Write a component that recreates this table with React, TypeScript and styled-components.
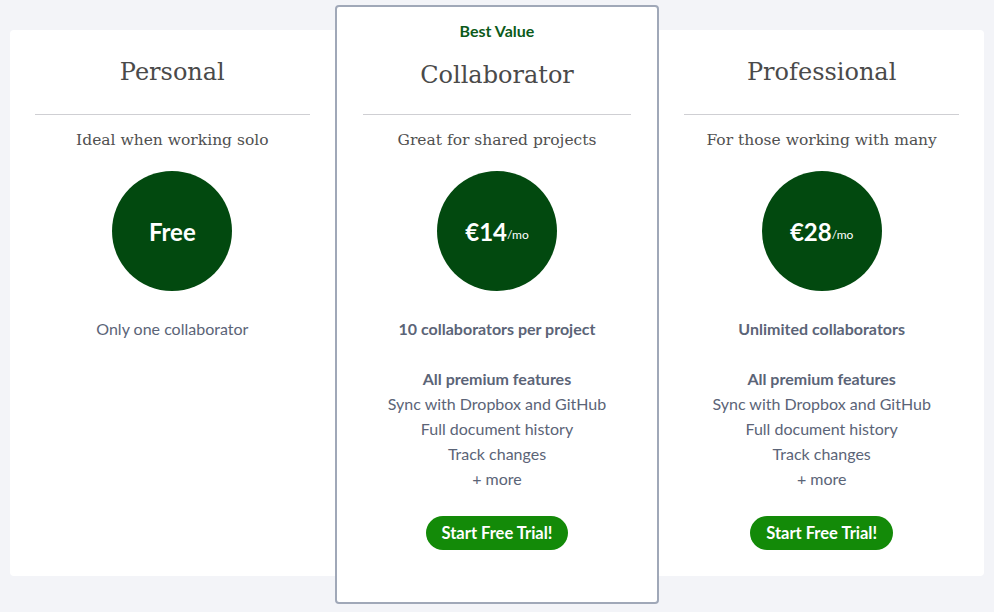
import React from 'react'
import styled, { createGlobalStyle } from 'styled-components'

const GlobalStyle = createGlobalStyle`
  body {
    margin: 0;
    background: #f3f4f8;
    font-family: Lato, "Liberation Sans", sans-serif;
  }
`

const Page = styled.div`
  padding: 5px 10px 0;
`

const Panel = styled.div`
  display: grid;
  grid-template-columns: repeat(3, 1fr);
  align-items: stretch;
`

const Card = styled.div<{ $featured?: boolean; $side?: 'left' | 'right' }>`
  display: flex;
  flex-direction: column;
  align-items: center;
  text-align: center;
  background: #ffffff;
  padding: 0 25px;
  margin: 25px 0 28px;
  border-radius: ${(p) => (p.$side === 'left' ? '4px 0 0 4px' : '0 4px 4px 0')};
  ${(p) =>
    p.$featured &&
    `
    margin: 0;
    padding: 0 26px 52px;
    border: 2px solid #a0a8b8;
    border-radius: 4px;
  `}
`

const Badge = styled.div`
  margin-top: 13px;
  line-height: 22px;
  font-size: 16px;
  font-weight: 700;
  color: #0b5a1a;
`

const Title = styled.h2<{ $featured?: boolean }>`
  margin: ${(p) => (p.$featured ? '17px 0 23px' : '26px 0 26px')};
  line-height: 32px;
  font-family: "DejaVu Serif", "Liberation Serif", serif;
  font-weight: 400;
  font-size: 24px;
  color: #4a4a4a;
`

const Rule = styled.hr`
  align-self: stretch;
  margin: 0;
  border: none;
  border-top: 1px solid #cfcfd3;
`

const Tagline = styled.p`
  margin: 13px 0 0;
  line-height: 24px;
  font-family: "DejaVu Serif", "Liberation Serif", serif;
  font-size: 15.5px;
  color: #505050;
`

const Price = styled.div`
  margin-top: 19px;
  width: 120px;
  height: 120px;
  border-radius: 50%;
  background: #02490f;
  color: #ffffff;
  display: flex;
  align-items: center;
  justify-content: center;
  font-size: 24px;
  font-weight: 700;
`

const Per = styled.span`
  font-size: 12px;
  font-weight: 400;
  margin-top: 6px;
`

const Seats = styled.p<{ $bold?: boolean }>`
  margin: 28px 0 0;
  line-height: 20px;
  font-size: 16px;
  font-weight: ${(p) => (p.$bold ? 700 : 400)};
  color: #5b6477;
`

const Features = styled.ul`
  list-style: none;
  margin: 27px 0 0;
  padding: 0;
  line-height: 25px;
  font-size: 16px;
  color: #5b6477;
`

const Feature = styled.li<{ $bold?: boolean }>`
  font-weight: ${(p) => (p.$bold ? 700 : 400)};
`

const TrialButton = styled.button`
  margin-top: 25px;
  height: 34px;
  padding: 0 16px;
  border: none;
  border-radius: 17px;
  background: #138a08;
  color: #ffffff;
  font-family: Lato, "Liberation Sans", sans-serif;
  font-size: 16.5px;
  font-weight: 700;
  cursor: pointer;
`

const premium = [
  'Sync with Dropbox and GitHub',
  'Full document history',
  'Track changes',
  '+ more',
]

type Plan = {
  name: string
  tagline: string
  price: string
  per?: boolean
  seats: string
  paid?: boolean
  featured?: boolean
  side?: 'left' | 'right'
}

const plans: Plan[] = [
  {
    name: 'Personal',
    tagline: 'Ideal when working solo',
    price: 'Free',
    seats: 'Only one collaborator',
    side: 'left',
  },
  {
    name: 'Collaborator',
    tagline: 'Great for shared projects',
    price: '€14',
    per: true,
    seats: '10 collaborators per project',
    paid: true,
    featured: true,
  },
  {
    name: 'Professional',
    tagline: 'For those working with many',
    price: '€28',
    per: true,
    seats: 'Unlimited collaborators',
    paid: true,
    side: 'right',
  },
]

const PlanCard = ({ plan }: { plan: Plan }) => (
  <Card $featured={plan.featured} $side={plan.side}>
    {plan.featured && <Badge>Best Value</Badge>}
    <Title $featured={plan.featured}>{plan.name}</Title>
    <Rule />
    <Tagline>{plan.tagline}</Tagline>
    <Price>
      {plan.price}
      {plan.per && <Per>/mo</Per>}
    </Price>
    <Seats $bold={plan.paid}>{plan.seats}</Seats>
    {plan.paid && (
      <>
        <Features>
          <Feature $bold>All premium features</Feature>
          {premium.map((f) => (
            <Feature key={f}>{f}</Feature>
          ))}
        </Features>
        <TrialButton>Start Free Trial!</TrialButton>
      </>
    )}
  </Card>
)

export default function App() {
  return (
    <>
      <GlobalStyle />
      <Page>
        <Panel>
          {plans.map((p) => (
            <PlanCard key={p.name} plan={p} />
          ))}
        </Panel>
      </Page>
    </>
  )
}
